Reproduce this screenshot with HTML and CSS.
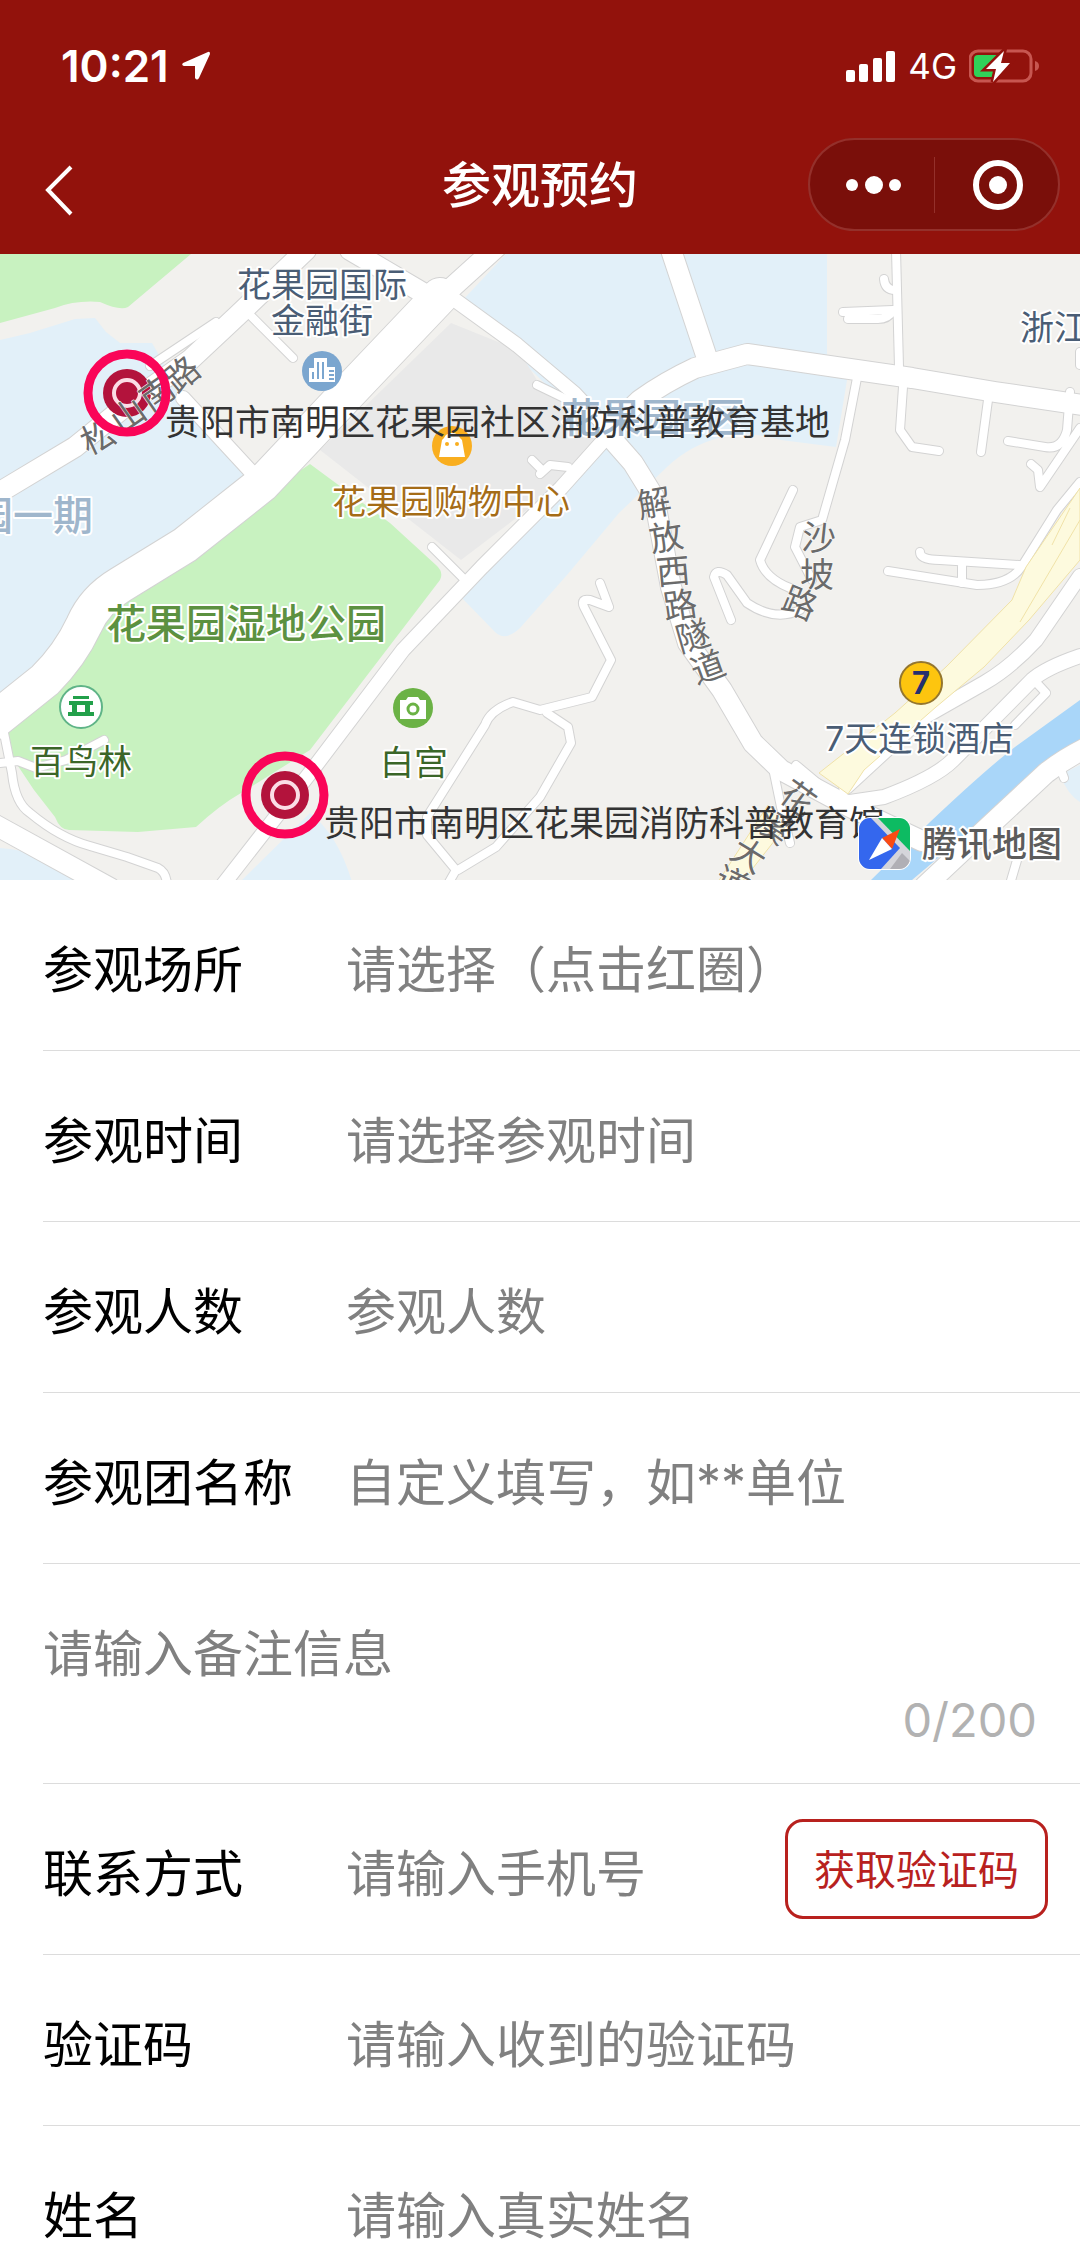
FILE: index.html
```html
<!DOCTYPE html>
<html lang="zh-CN">
<head>
  <meta charset="UTF-8">
  <meta name="viewport" content="width=device-width, initial-scale=1.0">
  <title>参观预约</title>
  <link rel="stylesheet" href="styles.css">
</head>
<body>

  <header>
    <div class="status-bar">
      <div class="status-left">
        <span class="time">10:21</span>
        <svg width="30" height="32" viewBox="0 0 30 32"><path d="M27 2 L2 13 Q0 15 3 16 H14 V28 Q16 31 18 28 L29 4 Q29 1 27 2 Z" fill="#fff"/></svg>
      </div>
      <div class="status-right">
        <svg width="50" height="32" viewBox="0 0 50 32" fill="#fff">
          <rect x="0" y="20" width="9" height="12" rx="2"/>
          <rect x="13" y="14" width="9" height="18" rx="2"/>
          <rect x="27" y="8" width="9" height="24" rx="2"/>
          <rect x="40" y="1" width="9" height="31" rx="2"/>
        </svg>
        <span class="network">4G</span>
        <svg width="70" height="36" viewBox="0 0 70 36">
          <rect x="1" y="3" width="61" height="30" rx="8" fill="none" stroke="#c75650" stroke-width="3"/>
          <path d="M66 13 Q70 14 70 18 Q70 22 66 23 Z" fill="#c75650"/>
          <rect x="5" y="7" width="25" height="22" rx="4" fill="#30d158"/>
          <path d="M35 3 L17 21 H27 L24 34 L41 15 H32 Z" fill="#fff" stroke="#92120c" stroke-width="5" paint-order="stroke"/>
        </svg>
      </div>
    </div>
    <nav>
      <button type="button" class="back" aria-label="返回">
        <svg width="30" height="62" viewBox="0 0 30 62"><path d="M27 13 L4 36 L27 60" fill="none" stroke="#fff" stroke-width="4"/></svg>
      </button>
      <h1>参观预约</h1>
      <div class="capsule">
        <button type="button" aria-label="更多">
          <svg width="56" height="20" viewBox="0 0 56 20" fill="#fff"><circle cx="6" cy="10" r="6"/><circle cx="28" cy="10" r="9"/><circle cx="49" cy="10" r="6"/></svg>
        </button>
        <button type="button" aria-label="关闭">
          <svg width="52" height="52" viewBox="0 0 52 52"><circle cx="26" cy="26" r="22" fill="none" stroke="#fff" stroke-width="6"/><circle cx="26" cy="26" r="9" fill="#fff"/></svg>
        </button>
      </div>
    </nav>
  </header>

  <main>
    <div class="map">
      <svg viewBox="0 254 1080 626">
        <!-- areas -->
        <g class="area-blue">
          <path d="M0 340 L30 333 L75 319 L95 318 L106 332 L120 343 L152 343 L176 385 L252 480 L190 560 L60 680 L0 720 Z"/>
          <path d="M506 254 H827 V360 L847 380 L836 447 L781 440 Q745 430 722 437 Q690 445 667 467 L619 513 L567 575 L520 628 Q505 642 495 632 L461 597 L560 480 L600 437 L461 302 Z"/>
          <path d="M0 848 Q50 852 90 882 H0 Z"/>
          <path d="M240 882 L310 813 Q338 835 352 882 Z"/>
          <path d="M1060 775 L1080 765 V802 Q1068 795 1060 775 Z"/>
        </g>
        <path class="area-mall" d="M451 323 L518 350 L537 380 L600 437 L540 500 L461 560 L320 450 Z"/>
        <g class="area-green">
          <path d="M0 254 H191 L128 307 Q120 311 100 302 Q76 300 55 308 L0 323 Z"/>
          <path d="M310 464 L390 523 L436 565 Q444 572 440 580 L310 750 L241 793 Q220 805 196 827 L138 832 L69 830 Q60 830 55 817 L34 790 L14 760 L5 730 L30 690 L72 660 L100 600 L190 545 Z"/>
        </g>
        <path class="area-water" d="M1080 700 L1015 747 Q985 770 929 823 L871 880 H912 L995 810 L1039 767 L1080 740 Z"/>

        <!-- roads, first the outline and then the surface -->
        <defs>
          <g id="small-roads">
            <path d="M248 313 L293 358"/>
            <path d="M150 366 L216 322"/>
            <path d="M896 250 L899 367"/>
            <path d="M843 312 L893 310 M848 319 H878 Q888 319 893 311 M884 279 Q885 290 895 290"/>
            <path d="M857 378 L845 440 L822 520 L800 527 L795 547 L812 580"/>
            <path d="M903 387 L900 430 L912 447 L939 451"/>
            <path d="M988 400 L981 452"/>
            <path d="M1070 392 L1067 430 Q1062 450 1045 447 L1008 441 M1080 428 L1040 487 L1038 470 L1031 464"/>
            <path d="M1080 482 L1057 510 L1022 566 Q1010 585 977 585 L888 571"/>
            <path d="M920 552 Q920 560 940 560 L1019 565 M962 562 V583"/>
            <path d="M600 583 L609 607 L590 600 Q580 598 584 607 L611 660 L592 697 L540 710 L513 702 Q490 710 485 725 L427 817 V835 L456 870 L448 884 M547 713 L568 727 L571 743 L540 797 L496 847 L458 870"/>
            <path d="M731 620 L714 577 Q716 568 727 575 L747 603 Q775 622 800 610 M793 490 L760 560 Q765 578 790 588"/>
            <path d="M432 547 L465 580 M532 460 L542 470 M540 474 L550 465 L568 467 M537 385 L568 400 M1080 352 V365"/>
            <path d="M3 728 L12 773 Q15 803 30 813 Q60 838 90 846 L127 857 L158 868 Q166 872 167 884 M0 763 L18 761 L36 768 L66 760 L104 740"/>
            <path d="M774 773 L781 807 L790 843 M796 765 L820 785"/>
            <path d="M1034 680 L1046 693 L1015 725 M1010 884 L1020 850 M1061 770 L1064 778"/>
          </g>
          <g id="middle-roads">
            <path d="M604 440 L561 488 L482 567 L403 650 L310 773 L222 886"/>
            <path d="M183 398 L255 476"/>
            <path d="M455 300 L517 345 L574 393 L604 425"/>
            <path d="M1080 576 L1036 640 Q1010 668 984 683 L919 720 L846 787"/>
            <path d="M1080 656 Q1045 668 1032 680 L953 760 Q935 778 884 797 L850 802"/>
          </g>
          <g id="main-roads">
            <path d="M306 250 L238 315 L190 360 L127 405 L75 447 L-10 498"/>
            <path d="M350 250 L435 300 M500 244 L437 301"/>
            <path d="M671 250 L706 355"/>
            <path d="M609 430 L640 400 Q665 382 695 368 L747 354 L843 368 L912 378 L995 392 L1090 406"/>
            <path d="M604 430 L633 463 L654 497 L671 587 L688 643 L722 690 L753 743 L781 770 L850 807 L922 841"/>
            <path d="M1090 746 Q1065 758 1046 773 L988 827 L925 886"/>
            <path d="M-10 822 L110 888"/>
          </g>
          <path id="wide-road" d="M440 296 L344 397 L262 484 L185 545 L120 585 Q95 600 84 625 Q70 655 45 680 L-10 724"/>
        </defs>
        <use href="#small-roads" class="edge edge-small"/>
        <use href="#middle-roads" class="edge edge-middle"/>
        <use href="#main-roads" class="edge edge-main"/>
        <use href="#wide-road" class="edge edge-wide"/>
        <use href="#small-roads" class="road road-small"/>
        <use href="#middle-roads" class="road road-middle"/>
        <use href="#main-roads" class="road road-main"/>
        <use href="#wide-road" class="road road-wide"/>
        <g class="highway">
          <path d="M1080 488 L1026 567 L1012 600 L946 667 L895 713 L819 773 L848 794 L864 770 L936 707 L984 667 L1029 620 L1080 560 Z"/>
          <path d="M768 805 L718 882 H742 L786 826"/>
          <path d="M1080 520 L1020 622 M1070 508 L1052 545" fill="none"/>
        </g>

        <!-- place names -->
        <g class="poi">
          <text x="237" y="297">花果园国际</text>
          <text x="271" y="333">金融街</text>
          <text x="1020" y="340">浙江</text>
          <text x="825" y="751">7天连锁酒店</text>
        </g>
        <text class="poi brown" x="332" y="514">花果园购物中心</text>
        <text class="poi dark-green" x="30" y="774">百鸟林</text>
        <text class="poi dark-green" x="380" y="775">白宫</text>
        <text class="district" x="-27" y="530">园一期</text>
        <text class="district" x="561" y="432">花果园E区</text>
        <text class="park" x="106" y="638">花果园湿地公园</text>

        <!-- selectable places: filled centre under the street names -->
        <g id="target">
          <circle cx="127" cy="393" r="24" fill="#b3133c"/>
          <circle cx="127" cy="393" r="13" fill="none" stroke="#fbdde6" stroke-width="4"/>
        </g>
        <use href="#target" x="158" y="402"/>

        <g class="street">
          <text transform="translate(98 437) rotate(-25)">松</text>
          <text transform="translate(128 415) rotate(-35)">山</text>
          <text transform="translate(157 393) rotate(-35)">南</text>
          <text transform="translate(182 374) rotate(-40)">路</text>
          <text transform="translate(654 503) rotate(-10)">解</text>
          <text transform="translate(666 537) rotate(-10)">放</text>
          <text transform="translate(673 571) rotate(-5)">西</text>
          <text transform="translate(680 605) rotate(-8)">路</text>
          <text transform="translate(693 636) rotate(-16)">隧</text>
          <text transform="translate(708 667) rotate(-20)">道</text>
          <text transform="translate(819 538) rotate(6)">沙</text>
          <text transform="translate(817 574)">坡</text>
          <text transform="translate(800 603) rotate(22)">路</text>
          <text transform="translate(798 798) rotate(36)">花</text>
          <text transform="translate(774 826) rotate(36)">溪</text>
          <text transform="translate(749 855) rotate(32)">大</text>
          <text transform="translate(732 883) rotate(26)">道</text>
        </g>

        <g fill="none" stroke="#fa0558" stroke-width="9">
          <circle cx="127" cy="393" r="39"/>
          <circle cx="285" cy="795" r="39"/>
        </g>

        <g transform="translate(322 371)">
          <circle r="20" fill="#7ba6cf"/>
          <path d="M-13 11 V-3 H-8 V-13 H5 V-4 H13 V11 Z" fill="#fff"/>
          <path d="M-4 8 V-9 M1 8 V-9 M-9 8 V1 M7 0 H12 M7 4 H12 M7 8 H12" stroke="#7ba6cf" stroke-width="2"/>
        </g>
        <g transform="translate(452 446)">
          <circle r="20" fill="#f9ae1f"/>
          <path d="M-8 -8 Q-6 -13 0 -13 Q6 -13 8 -8 L10 -6 L13 11 H-13 L-10 -6 Z" fill="#fff"/>
          <circle cx="-5" cy="-2" r="2" fill="#f9ae1f"/><circle cx="5" cy="-2" r="2" fill="#f9ae1f"/>
        </g>
        <g transform="translate(81 707)">
          <circle r="21" fill="#fff" stroke="#5fb487" stroke-width="2"/>
          <path d="M-8 -11 H8 V-8 H-8 Z M-12 -6 H12 V-2 H9 V5 H13 V9 H-13 V5 H-9 V-2 H-12 Z M-4 -2 V5 H4 V-2 Z" fill="#22a04a" fill-rule="evenodd"/>
        </g>
        <g transform="translate(413 708)">
          <circle r="20" fill="#6bb245"/>
          <path d="M-13 -8 H-7 L-5 -11 H5 L7 -8 H13 V11 H-13 Z" fill="#fff"/>
          <circle cy="1" r="5" fill="#fff" stroke="#6bb245" stroke-width="3"/>
        </g>
        <g transform="translate(921 683)">
          <circle r="21" fill="#fdc50f" stroke="#94762e" stroke-width="2"/>
          <text class="hotel-logo" y="11">7</text>
        </g>

        <g class="place">
          <text x="165" y="435">贵阳市南明区花果园社区消防科普教育基地</text>
          <text x="324" y="836">贵阳市南明区花果园消防科普教育馆</text>
        </g>

        <!-- map provider -->
        <g transform="translate(859 818)">
          <clipPath id="logo-shape"><rect width="51" height="51" rx="11"/></clipPath>
          <rect x="-1" y="-1" width="53" height="53" rx="12" fill="#fff"/>
          <g clip-path="url(#logo-shape)">
            <rect width="51" height="51" fill="#d5d5da"/>
            <path d="M0 0 H12 L41 30 L22 51 H0 Z" fill="#3467ee"/>
            <path d="M19 0 H51 V33 Z" fill="#0dbb62"/>
            <path d="M43 35 L51 43 V51 H31 Z" fill="#b0afb5"/>
          </g>
          <path d="M41 11 L23 20 L33 31 Z" fill="#fa4b14"/>
          <path d="M23 20 L10 42 L33 31 Z" fill="#fff"/>
        </g>
        <text class="provider" x="922" y="857">腾讯地图</text>
      </svg>
    </div>

    <form>
      <div class="row">
        <label for="place">参观场所</label>
        <input type="text" id="place" placeholder="请选择（点击红圈）" readonly>
      </div>
      <div class="row">
        <label for="visitTime">参观时间</label>
        <input type="text" id="visitTime" placeholder="请选择参观时间" readonly>
      </div>
      <div class="row">
        <label for="visitors">参观人数</label>
        <input type="text" id="visitors" inputmode="numeric" placeholder="参观人数">
      </div>
      <div class="row">
        <label for="groupName">参观团名称</label>
        <input type="text" id="groupName" placeholder="自定义填写，如**单位">
      </div>
      <div class="row remark">
        <textarea id="remark" rows="1" maxlength="200" placeholder="请输入备注信息" aria-label="备注信息"></textarea>
        <span class="counter">0/200</span>
      </div>
      <div class="row">
        <label for="phone">联系方式</label>
        <input type="tel" id="phone" placeholder="请输入手机号">
        <button type="button" class="code-button">获取验证码</button>
      </div>
      <div class="row">
        <label for="code">验证码</label>
        <input type="text" id="code" placeholder="请输入收到的验证码">
      </div>
      <div class="row">
        <label for="userName">姓名</label>
        <input type="text" id="userName" placeholder="请输入真实姓名">
      </div>
    </form>
  </main>

</body>
</html>
```
FILE: styles.css
```css
* {
  box-sizing: border-box;
}
body {
  margin: 0;
  height: 100vh;
  display: flex;
  flex-direction: column;
  overflow: hidden;
  background-color: #fff;
  font-family: Inter, "Noto Sans CJK SC", sans-serif;
  font-size: 50px;
}
button {
  font-family: inherit;
  background: none;
  border: none;
  padding: 0;
  cursor: pointer;
}
svg {
  display: block;
}

/* Header */
header {
  flex: none;
  background-color: #92120c;
  color: #fff;
  padding-bottom: 17px;
}
.status-bar {
  height: 132px;
  padding: 0 41px 0 61px;
  display: flex;
  justify-content: space-between;
  align-items: center;
}
.status-left {
  display: flex;
  align-items: center;
  gap: 12px;
}
.status-right {
  display: flex;
  align-items: center;
  gap: 12px;
}
.time {
  font-size: 44px;
  font-weight: 600;
}
.network {
  font-size: 35px;
}
nav {
  height: 105px;
  padding: 0 20px 0 44px;
  display: grid;
  grid-template-columns: 252px 1fr 252px;
  align-items: center;
}
.back {
  justify-self: start;
}
h1 {
  margin: 0;
  padding: 3px 24px 0 0;
  font-size: 49px;
  font-weight: 500;
  line-height: 72px;
  text-align: center;
}
.capsule {
  height: 93px;
  display: flex;
  align-items: center;
  background-color: #7a0f0a;
  border: 2px solid #94302b;
  border-radius: 47px;
}
.capsule button {
  flex: 1;
  height: 56px;
  padding-left: 4px;
  display: flex;
  align-items: center;
  justify-content: center;
}
.capsule button + button {
  border-left: 1px solid #94302b;
}

/* Scrolling part */
main {
  flex: 1;
  min-height: 0;
  overflow-y: auto;
  scrollbar-width: none;
}

/* Map */
.map {
  background-color: #f2f1ee;
  overflow: hidden;
}
.map svg {
  width: 100%;
  height: auto;
}
.area-blue {
  fill: #e2f0f9;
}
.area-mall {
  fill: #e9e9e9;
}
.area-green {
  fill: #c8f2c0;
}
.area-water {
  fill: #a9d6f9;
}
.edge,
.road {
  fill: none;
  stroke-linejoin: round;
  stroke-linecap: round;
}
.edge {
  stroke: #d3d3d3;
}
.road {
  stroke: #fff;
}
.edge-small {
  stroke-width: 10px;
}
.road-small {
  stroke-width: 8px;
}
.edge-middle {
  stroke-width: 16px;
}
.road-middle {
  stroke-width: 14px;
}
.edge-main {
  stroke-width: 22px;
}
.road-main {
  stroke-width: 20px;
}
.edge-wide {
  stroke-width: 38px;
}
.road-wide {
  stroke-width: 36px;
}
.highway {
  fill: #fdfade;
  stroke: #f0e2a8;
}
.map text {
  paint-order: stroke;
  stroke: #fff;
  stroke-width: 4px;
  stroke-linejoin: round;
}
.poi {
  font-size: 34px;
  fill: #4a5d75;
}
.brown {
  fill: #a56c17;
}
.dark-green {
  fill: #3b6628;
}
.district {
  font-size: 40px;
  font-weight: 500;
  fill: #9fb6cc;
}
.park {
  font-size: 40px;
  font-weight: 500;
  fill: #5c9140;
}
.map .street text {
  font-size: 34px;
  fill: #6b6b6b;
  stroke-width: 1px;
  text-anchor: middle;
  dominant-baseline: central;
}
.map .place text {
  font-size: 35px;
  fill: #333;
  stroke: none;
}
.map .hotel-logo {
  font-size: 31px;
  font-weight: 700;
  fill: #24306f;
  stroke: none;
  text-anchor: middle;
}
.provider {
  font-size: 35px;
  font-weight: 500;
  fill: #5c5c5c;
}

/* Form */
.row {
  height: 171px;
  margin-left: 43px;
  padding: 10px 32px 0 0;
  display: flex;
  align-items: center;
  border-bottom: 1px solid #dcdcdc;
}
.row label {
  width: 303px;
  flex: none;
  color: #000;
  line-height: 72px;
}
.row input,
.row textarea {
  flex: 1;
  min-width: 0;
  height: 72px;
  padding: 0;
  border: none;
  outline: none;
  resize: none;
  background: none;
  font: inherit;
  line-height: 72px;
}
.row ::placeholder {
  color: #808080;
  opacity: 1;
}
.remark {
  height: 220px;
  padding: 54px 43px 0 0;
  flex-direction: column;
  align-items: stretch;
  justify-content: flex-start;
}
.remark textarea {
  flex: none;
  overflow: hidden;
}
.counter {
  font-size: 47px;
  line-height: 60px;
  text-align: right;
  color: #b2b2b2;
}
.code-button {
  width: 263px;
  height: 100px;
  margin-bottom: 10px;
  padding-bottom: 5px;
  border: 3px solid #b8211e;
  border-radius: 18px;
  color: #b8211e;
  font-size: 41px;
}
```
